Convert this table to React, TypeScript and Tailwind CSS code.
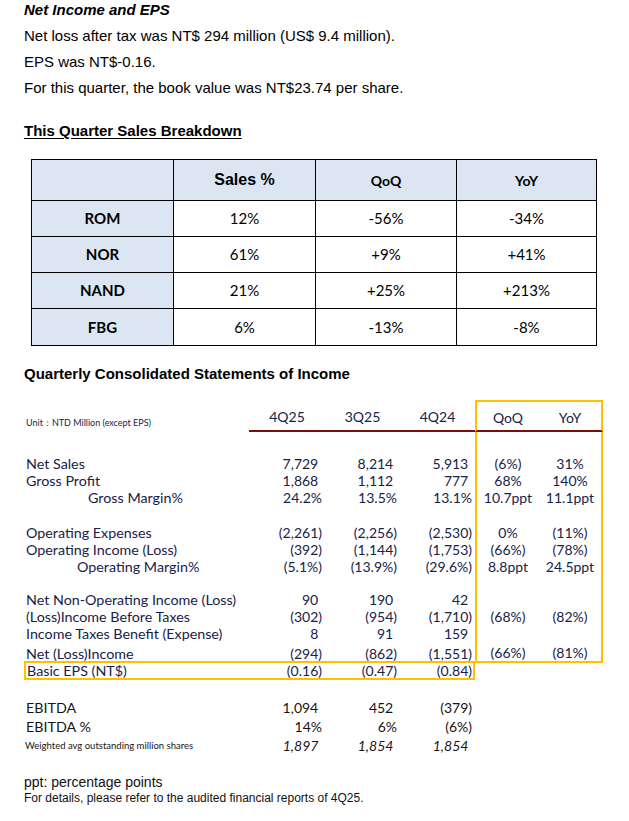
import React from 'react'

const arial = "font-['Liberation_Sans',Arial,sans-serif]"
const cal = "font-['Lato','Open_Sans',sans-serif]"

const breakdown = [
  ['ROM', '12%', '-56%', '-34%'],
  ['NOR', '61%', '+9%', '+41%'],
  ['NAND', '21%', '+25%', '+213%'],
  ['FBG', '6%', '-13%', '-8%'],
]

// pads plain numbers so digits line up with the closing paren of negatives
function Num({ v, italic }: { v: string; italic?: boolean }) {
  const pad = /\d$/.test(v)
  return (
    <span className={italic ? 'italic' : ''}>
      {v}
      {pad && <span className="invisible">)</span>}
    </span>
  )
}

type RowProps = {
  label?: string
  vals?: string[]
  qoq?: string
  yoy?: string
  boxed?: boolean
  last?: boolean
  h?: string
  labelCls?: string
  italic?: boolean
  color?: string
}

function Row({ label = '', vals = ['', '', ''], qoq = '', yoy = '', boxed = true, last, h = 'h-[17px]', labelCls = 'text-[14.3px] pl-[2px]', italic, color = 'text-[#17224a]' }: RowProps) {
  const pt = last ? 'pt-[3px]' : ''
  return (
    <div className={`grid grid-cols-[225px_76px_75px_75px_64px_64px] ${h} items-center leading-[16px] ${color}`}>
      <div className={`${labelCls} ${pt} whitespace-nowrap`}>{label}</div>
      {vals.map((v, i) => (
        <div key={i} className={`text-right pr-[3px] text-[14px] ${pt} whitespace-nowrap`}>
          <Num v={v} italic={italic} />
        </div>
      ))}
      <div className={`h-full flex items-center justify-center text-[14px] ${pt} ${boxed ? 'border-l-2 border-[#ffc000]' : ''} ${last ? 'border-b-2 border-[#ffc000]' : ''}`}>{qoq}</div>
      <div className={`h-full flex items-center justify-center text-[14px] ${pt} ${boxed ? 'border-r-2 border-[#ffc000]' : ''} ${last ? 'border-b-2 border-[#ffc000]' : ''}`}>{yoy}</div>
    </div>
  )
}

export default function App() {
  return (
    <div className="w-[629px] h-[821px] bg-white text-black overflow-hidden">
      <div className={`${arial} pl-[24px] pt-[1px]`}>
        <h2 className="text-[15px] font-bold italic leading-[17px]">Net Income and EPS</h2>
        <div className="text-[15px] leading-[26px] mt-[5px]">
          <p>Net loss after tax was NT$ 294 million (US$ 9.4 million).</p>
          <p>EPS was NT$-0.16.</p>
          <p>For this quarter, the book value was NT$23.74 per share.</p>
        </div>
        <h3 className="text-[15px] font-bold underline underline-offset-2 mt-[21px] leading-[17px]">This Quarter Sales Breakdown</h3>
      </div>

      {/* sales breakdown table */}
      <div className="ml-[31px] mt-[20px] w-[566px] border border-black">
        <div className="grid grid-cols-[142px_142px_141px_139px] h-[41px] bg-[#dce6f2] border-b border-black">
          <div className="border-r border-black" />
          <div className={`${arial} border-r border-black flex items-center justify-center text-[16px] font-bold`}>Sales %</div>
          <div className={`${cal} border-r border-black flex items-center justify-center text-[14px] font-bold`}>QoQ</div>
          <div className={`${cal} flex items-center justify-center text-[14px] font-bold`}>YoY</div>
        </div>
        {breakdown.map((r, i) => (
          <div key={r[0]} className={`grid grid-cols-[142px_142px_141px_139px] h-[36px] ${i < 3 ? 'border-b border-black' : ''} ${cal} text-[15px]`}>
            <div className="bg-[#dce6f2] border-r border-black flex items-center justify-center font-bold">{r[0]}</div>
            <div className="border-r border-black flex items-center justify-center">{r[1]}</div>
            <div className="border-r border-black flex items-center justify-center">{r[2]}</div>
            <div className="flex items-center justify-center">{r[3]}</div>
          </div>
        ))}
      </div>

      <h3 className={`${arial} text-[15px] font-bold pl-[24px] mt-[19px] leading-[17px]`}>Quarterly Consolidated Statements of Income</h3>

      {/* income statement */}
      <div className={`${cal} pl-[24px] mt-[18px]`}>
        <div className="grid grid-cols-[225px_76px_75px_75px_64px_64px] h-[32px] text-[#17224a]">
          <div className="flex items-end pb-[3px] pl-[2px] text-[9px]">Unit：NTD Million (except EPS)</div>
          {['4Q25', '3Q25', '4Q24'].map(q => (
            <div key={q} className="flex items-center justify-center text-[14px] border-b-2 border-[#7b0c0c] pt-[2px]">{q}</div>
          ))}
          <div className="flex items-center justify-center text-[14px] pt-[2px] border-l-2 border-t-2 border-b-2 border-[#ffc000] [border-bottom-color:#7b0c0c]">QoQ</div>
          <div className="flex items-center justify-center text-[14px] pt-[2px] border-r-2 border-t-2 border-b-2 border-[#ffc000] [border-bottom-color:#7b0c0c]">YoY</div>
        </div>
        <Row h="h-[23px]" />
        <Row label="Net Sales" vals={['7,729', '8,214', '5,913']} qoq="(6%)" yoy="31%" />
        <Row label="Gross Profit" vals={['1,868', '1,112', '777']} qoq="68%" yoy="140%" />
        <Row label="Gross Margin%" labelCls="text-[14.3px] pl-[64px]" vals={['24.2%', '13.5%', '13.1%']} qoq="10.7ppt" yoy="11.1ppt" />
        <Row h="h-[18px]" />
        <Row label="Operating Expenses" vals={['(2,261)', '(2,256)', '(2,530)']} qoq="0%" yoy="(11%)" />
        <Row label="Operating Income (Loss)" vals={['(392)', '(1,144)', '(1,753)']} qoq="(66%)" yoy="(78%)" />
        <Row label="Operating Margin%" labelCls="text-[14.3px] pl-[53px]" vals={['(5.1%)', '(13.9%)', '(29.6%)']} qoq="8.8ppt" yoy="24.5ppt" />
        <Row h="h-[16px]" />
        <Row label="Net Non-Operating Income (Loss)" vals={['90', '190', '42']} />
        <Row label="(Loss)Income Before Taxes" vals={['(302)', '(954)', '(1,710)']} qoq="(68%)" yoy="(82%)" />
        <Row label="Income Taxes Benefit (Expense)" vals={['8', '91', '159']} />
        <Row h="h-[21px]" label="Net (Loss)Income" vals={['(294)', '(862)', '(1,551)']} qoq="(66%)" yoy="(81%)" last />
        <div className="w-[451px] h-[19px] -mt-[2px] border-2 border-[#ffc000] grid grid-cols-[223px_76px_75px_73px] items-center text-[#17224a] leading-[15px]">
          <div className="text-[14.3px] pl-[1px]">Basic EPS (NT$)</div>
          <div className="text-right pr-[3px] text-[14px]">(0.16)</div>
          <div className="text-right pr-[3px] text-[14px]">(0.47)</div>
          <div className="text-right pr-[1px] text-[14px]">(0.84)</div>
        </div>
        <Row h="h-[18px]" boxed={false} />
        <Row h="h-[19px]" boxed={false} color="text-[#1a1410]" label="EBITDA" vals={['1,094', '452', '(379)']} />
        <Row h="h-[19px]" boxed={false} color="text-[#1a1410]" label="EBITDA %" vals={['14%', '6%', '(6%)']} />
        <Row h="h-[19px]" boxed={false} color="text-[#1a1410]" italic label="Weighted avg outstanding million shares" labelCls="text-[9.5px] pl-[1px]" vals={['1,897', '1,854', '1,854']} />
      </div>

      <div className={`${arial} pl-[24px] mt-[19px] text-[#111]`}>
        <p className="text-[14px] leading-[16px]">ppt: percentage points</p>
        <p className="text-[12px] leading-[16px]">For details, please refer to the audited financial reports of 4Q25.</p>
      </div>
    </div>
  )
}
